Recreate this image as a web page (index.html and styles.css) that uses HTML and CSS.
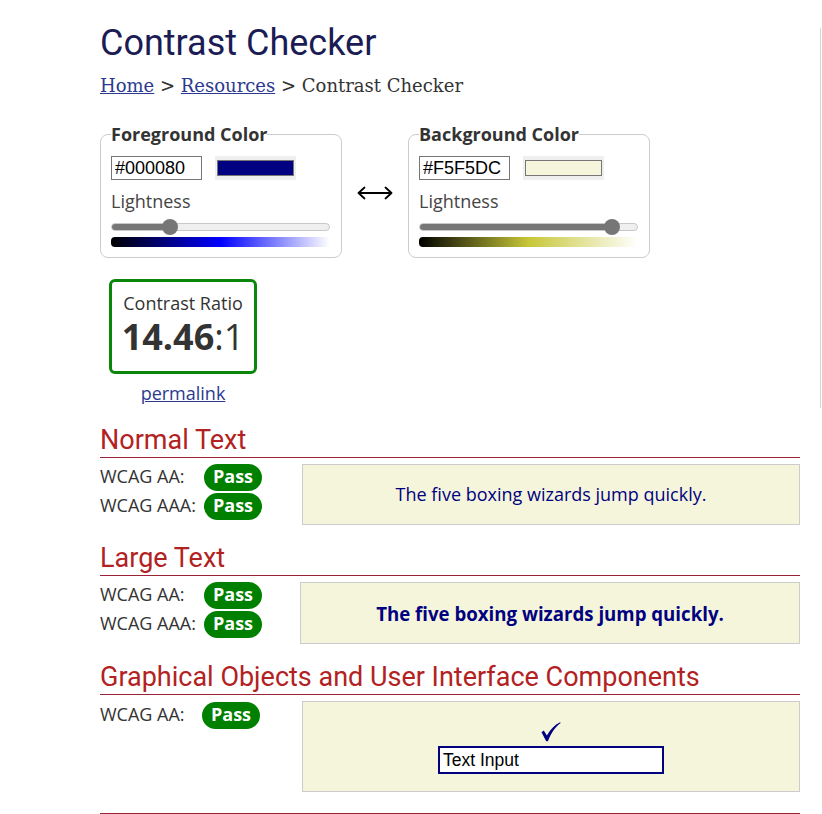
FILE: index.html
```html
<!DOCTYPE html>
<html lang="en">
<head>
<meta charset="utf-8">
<title>Contrast Checker</title>
<link rel="stylesheet" href="styles.css">
</head>
<body>
<div class="page">
  <main class="main">
    <h1 class="title">Contrast Checker</h1>
    <nav class="crumbs"><a href="#">Home</a> &gt; <a href="#">Resources</a> &gt; Contrast Checker</nav>

    <div class="pickers">
      <fieldset class="picker">
        <legend>Foreground Color</legend>
        <div class="inputs">
          <input class="hex" type="text" value="#000080" aria-label="Foreground hex">
          <span class="swatch"><span class="swatch-fill swatch-fg"></span></span>
        </div>
        <div class="light-label">Lightness</div>
        <div class="slider">
          <div class="track"><div class="fill" style="width:59px"></div></div>
          <div class="thumb" style="left:51px"></div>
        </div>
        <div class="grad grad-fg"></div>
      </fieldset>

      <div class="swap">
        <svg width="36" height="14" viewBox="0 0 36 14" aria-hidden="true">
          <path d="M1.5 7H34.5M7.5 1.5L1.5 7L7.5 12.5M28.5 1.5L34.5 7L28.5 12.5" fill="none" stroke="#000" stroke-width="1.8" stroke-linecap="round" stroke-linejoin="round"/>
        </svg>
      </div>

      <fieldset class="picker">
        <legend>Background Color</legend>
        <div class="inputs">
          <input class="hex" type="text" value="#F5F5DC" aria-label="Background hex">
          <span class="swatch"><span class="swatch-fill swatch-bg"></span></span>
        </div>
        <div class="light-label">Lightness</div>
        <div class="slider">
          <div class="track"><div class="fill" style="width:193px"></div></div>
          <div class="thumb" style="left:185px"></div>
        </div>
        <div class="grad grad-bg"></div>
      </fieldset>
    </div>

    <div class="ratio-wrap">
      <div class="ratio">
        <div class="ratio-label">Contrast Ratio</div>
        <div class="ratio-value"><b>14.46</b>:1</div>
      </div>
      <a class="permalink" href="#">permalink</a>
    </div>

    <section class="result">
      <h2>Normal Text</h2>
      <div class="result-body">
        <div class="checks">
          <span class="label">WCAG AA:</span><span class="pass">Pass</span>
          <span class="label">WCAG AAA:</span><span class="pass">Pass</span>
        </div>
        <div class="sample">The five boxing wizards jump quickly.</div>
      </div>
    </section>

    <section class="result">
      <h2>Large Text</h2>
      <div class="result-body result-body-large">
        <div class="checks">
          <span class="label">WCAG AA:</span><span class="pass">Pass</span>
          <span class="label">WCAG AAA:</span><span class="pass">Pass</span>
        </div>
        <div class="sample sample-large">The five boxing wizards jump quickly.</div>
      </div>
    </section>

    <section class="result">
      <h2>Graphical Objects and User Interface Components</h2>
      <div class="result-body">
        <div class="checks checks-ui">
          <span class="label">WCAG AA:</span><span class="pass">Pass</span>
        </div>
        <div class="sample sample-ui">
          <svg class="check" width="20" height="20" viewBox="0 0 20 20" aria-hidden="true">
            <path d="M0.5 10.2L2.8 8.6L5.9 13.6C9.3 7.6 13.4 3 19.2 0.3L19.6 1.1C14.4 4.9 10.3 10.8 6.9 19.3H5.2Z" fill="#000080"/>
          </svg>
          <div class="ui-input">Text Input</div>
        </div>
      </div>
    </section>

    <hr class="end">
  </main>
  <aside class="side"></aside>
</div>
</body>
</html>
```

FILE: styles.css
```css
html, body {
  margin: 0;
  padding: 0;
  background: #fff;
  overflow: hidden;
}

body {
  font-family: "Open Sans", "Liberation Sans", sans-serif;
  font-size: 18px;
  color: #333;
}

.page {
  display: flex;
  align-items: flex-start;
}

.main {
  width: 700px;
  margin-left: 100px;
  flex: none;
}

.side {
  margin-left: 20px;
  margin-top: 28px;
  height: 380px;
  border-left: 1px solid #d4d4d4;
  flex: none;
  width: 10px;
}

.title {
  margin: 22px 0 0;
  font-family: Roboto, "Liberation Sans", sans-serif;
  font-weight: 400;
  font-size: 36px;
  line-height: 42px;
  color: #1c1c55;
}

.crumbs {
  margin-top: 11px;
  font-family: "DejaVu Serif", "Liberation Serif", serif;
  font-size: 18px;
  line-height: 22px;
  color: #333;
}

.crumbs a {
  color: #2b3a8f;
  text-decoration: underline;
}

.pickers {
  display: flex;
  align-items: center;
  margin-top: 25px;
}

.picker {
  width: 242px;
  box-sizing: border-box;
  margin: 0;
  padding: 10px 10px 10px;
  border: 1px solid #cccccc;
  border-radius: 8px;
  min-width: 0;
}

.picker legend {
  padding: 0;
  font-weight: 700;
  font-size: 18px;
  line-height: 24px;
  color: #333;
}

.inputs {
  display: flex;
  align-items: center;
  gap: 13px;
}

.hex {
  width: 91px;
  height: 24px;
  box-sizing: border-box;
  margin: 0;
  padding: 0 3px;
  border: 1px solid #767676;
  font-family: "Liberation Sans", Arial, sans-serif;
  font-size: 18px;
  color: #000;
  background: #fff;
  border-radius: 0;
}

.swatch {
  display: block;
  width: 81px;
  height: 24px;
  box-sizing: border-box;
  padding: 4px 2px;
  background: #efefef;
}

.swatch-fill {
  display: block;
  height: 100%;
  box-sizing: border-box;
  border: 1px solid #767676;
}

.swatch-fg { background: #000080; }
.swatch-bg { background: #f5f5dc; }

.light-label {
  margin-top: 9px;
  line-height: 24px;
  color: #444;
}

.slider {
  position: relative;
  margin-top: 7px;
  height: 16px;
  width: 219px;
}

.track {
  position: absolute;
  left: 0;
  right: 0;
  top: 3px;
  height: 8px;
  box-sizing: border-box;
  border: 1px solid #c9c9c9;
  border-radius: 4px;
  background: #efefef;
  overflow: hidden;
}

.fill {
  height: 100%;
  background: #767676;
}

.thumb {
  position: absolute;
  top: -1px;
  width: 16px;
  height: 16px;
  border-radius: 50%;
  background: #767676;
}

.grad {
  margin-top: 1px;
  width: 219px;
  height: 10px;
  border-radius: 4px;
}

.grad-fg {
  background: linear-gradient(to right, #000 0%, #0000ff 50%, #ffffff 100%);
}

.grad-bg {
  background: linear-gradient(to right, #000 0%, #c7c738 50%, #ffffff 100%);
}

.swap {
  width: 66px;
  display: flex;
  justify-content: center;
  margin-top: 6px;
}

.ratio-wrap {
  margin: 21px 0 0 9px;
  width: 148px;
  display: flex;
  flex-direction: column;
  align-items: center;
}

.ratio {
  width: 148px;
  box-sizing: border-box;
  border: 3px solid #0a870a;
  border-radius: 6px;
  padding: 9px 0 13px;
  text-align: center;
}

.ratio-label {
  line-height: 24px;
  color: #333;
}

.ratio-value {
  font-size: 36px;
  line-height: 43px;
  color: #333;
}

.ratio-value b {
  font-weight: 700;
}

.permalink {
  margin-top: 7px;
  line-height: 24px;
  color: #2b3a8f;
  text-decoration: underline;
}

.result {
  margin-top: 18px;
}

.result:first-of-type {
  margin-top: 20px;
}

.result h2 {
  margin: 0;
  padding-bottom: 2px;
  border-bottom: 1px solid #9b2335;
  font-family: Roboto, "Liberation Sans", sans-serif;
  font-weight: 400;
  font-size: 27px;
  line-height: 30px;
  color: #b22222;
}

.result-body {
  display: grid;
  grid-template-columns: 202px 1fr;
  padding-top: 6px;
  align-items: start;
}

.result-body-large {
  grid-template-columns: 200px 1fr;
}

.checks {
  display: grid;
  grid-template-columns: 104px auto;
  grid-auto-rows: 29px;
  justify-items: start;
  align-items: start;
}

.checks-ui {
  grid-template-columns: 102px auto;
  padding-top: 1px;
}

.label {
  line-height: 24px;
  color: #333;
}

.pass {
  display: block;
  height: 27px;
  box-sizing: border-box;
  padding: 0 9px 2px;
  border-radius: 14px;
  background: #008000;
  color: #fff;
  font-weight: 700;
  line-height: 25px;
}

.sample {
  background: #f5f5dc;
  border: 1px solid #cccccc;
  padding: 17px 0 17px;
  text-align: center;
  color: #000080;
  line-height: 25px;
}

.sample-large {
  font-size: 18.66px;
  font-weight: 700;
  padding: 18px 0 17px;
}

.sample-ui {
  padding: 20px 0 17px;
  display: flex;
  flex-direction: column;
  align-items: center;
}

.check {
  display: block;
  margin-bottom: 4px;
}

.ui-input {
  width: 226px;
  height: 28px;
  box-sizing: border-box;
  border: 2px solid #000080;
  background: #fff;
  padding: 0 3px;
  text-align: left;
  font-family: "Liberation Sans", Arial, sans-serif;
  font-size: 17.5px;
  line-height: 24px;
  color: #000;
}

.end {
  margin: 21px 0 0;
  border: 0;
  border-top: 1px solid #9b2335;
  height: 0;
}
```
